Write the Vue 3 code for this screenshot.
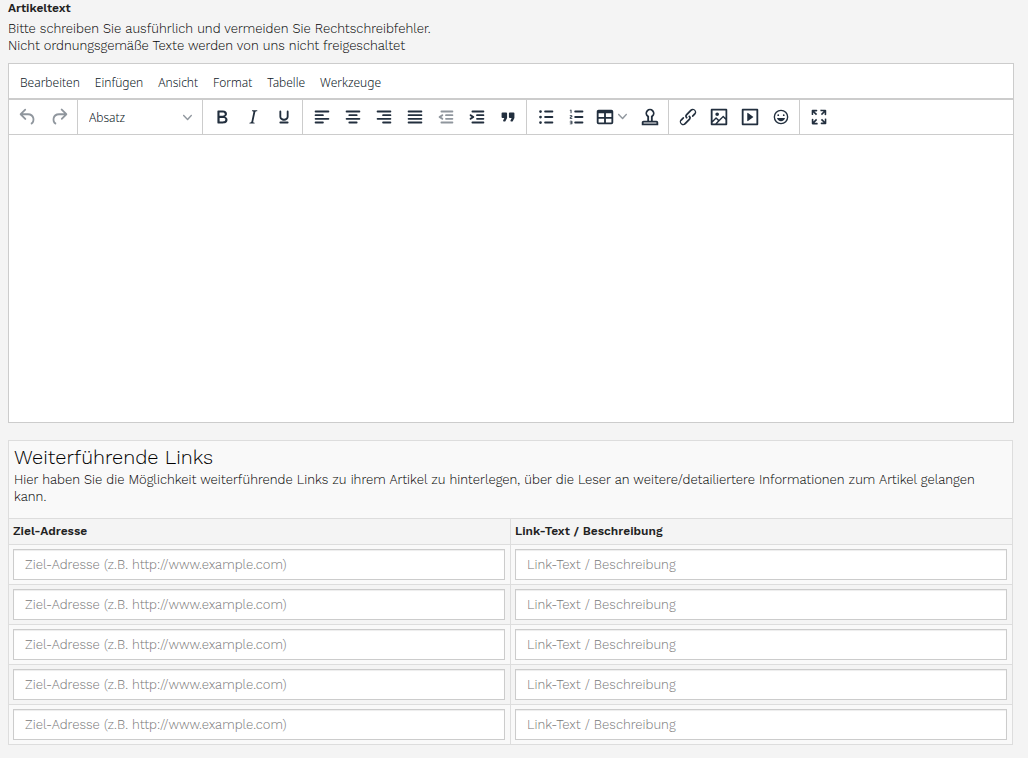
<script setup>
import { ref } from 'vue'

const menus = ['Bearbeiten', 'Einfügen', 'Ansicht', 'Format', 'Tabelle', 'Werkzeuge']

const bar = (x, y, w) => `M${x} ${y}h${w}c.6 0 1 .4 1 1s-.4 1-1 1H${x}a1 1 0 110-2z`
const dot = (y) => `M4.5 ${y}a1.5 1.5 0 103 0a1.5 1.5 0 10-3 0z`
const listBars = (x) => bar(x, 5, 8) + bar(x, 11, 8) + bar(x, 17, 8)

const history = [
  { label: 'Rückgängig', disabled: true, d: 'M6.4 8H12c3.7 0 6.2 2 6.8 5.1.6 2.7-.4 5.6-2.3 6.8a1 1 0 01-1-1.8c1.1-.6 1.8-2.7 1.4-4.6-.5-2.1-2.1-3.5-4.9-3.5H6.4l3.3 3.3a1 1 0 11-1.4 1.4l-5-5a1 1 0 010-1.4l5-5a1 1 0 011.4 1.4L6.4 8z' },
  { label: 'Wiederholen', disabled: true, d: 'M17.6 10H12c-2.8 0-4.4 1.4-4.9 3.5-.4 2 .3 4 1.4 4.6a1 1 0 11-1 1.8c-2-1.2-2.9-4.1-2.3-6.8.6-3 3-5.1 6.8-5.1h5.6l-3.3-3.3a1 1 0 111.4-1.4l5 5a1 1 0 010 1.4l-5 5a1 1 0 01-1.4-1.4l3.3-3.3z' },
]

const chevron = 'M8.7 2.2c.3-.3.8-.3 1 0 .4.4.4.9 0 1.2L5.7 7.8c-.3.3-.9.3-1.2 0L.2 3.4a.8.8 0 010-1.2c.3-.3.8-.3 1.1 0L5 6l3.7-3.8z'

const groups = [
  [
    { label: 'Fett', d: 'M7.8 19c-.3 0-.5 0-.6-.2l-.2-.5V5.7c0-.2 0-.4.2-.5l.6-.2h5c1.5 0 2.7.3 3.5 1 .7.6 1.1 1.4 1.1 2.5a3 3 0 01-.6 1.9c-.4.6-1 1-1.6 1.2.4.1.9.3 1.3.6s.8.7 1 1.2c.4.4.5 1 .5 1.6 0 1.3-.4 2.3-1.3 3-.8.7-2.1 1-3.8 1H7.8zm5-8.3c.6 0 1.2-.1 1.6-.5.4-.3.6-.7.6-1.3 0-1.1-.8-1.7-2.3-1.7H9.3v3.5h3.4zm.5 6c.7 0 1.3-.1 1.7-.4.4-.4.6-.9.6-1.5s-.2-1-.7-1.4c-.4-.3-1-.4-2-.4H9.4v3.8h4z' },
    { label: 'Kursiv', d: 'M16.7 4.7l-.1.9h-.3c-.6 0-1 0-1.4.3-.3.3-.4.6-.5 1.1l-2.1 9.8v.6c0 .5.4.8 1.4.8h.2l-.2.8H8l.2-.8h.2c1.1 0 1.8-.5 2-1.5l2-9.8.1-.5c0-.6-.4-.8-1.4-.8h-.3l.2-.9h5.8z' },
    { label: 'Unterstrichen', d: 'M16 5c.6 0 1 .4 1 1v5.5a4 4 0 01-.4 1.8l-1 1.4a5.3 5.3 0 01-5.5 1 5 5 0 01-1.6-1c-.5-.4-.8-.9-1.1-1.4a4 4 0 01-.4-1.8V6c0-.6.4-1 1-1s1 .4 1 1v5.5c0 .3 0 .6.2 1l.6.7a3.3 3.3 0 002.2.8 3.4 3.4 0 002.2-.8c.3-.2.4-.5.6-.8l.2-.9V6c0-.6.4-1 1-1zM8 17h8c.6 0 1 .4 1 1s-.4 1-1 1H8a1 1 0 010-2z' },
  ],
  [
    { label: 'Linksbündig', d: bar(5, 5, 14) + bar(5, 9, 8) + bar(5, 13, 14) + bar(5, 17, 8) },
    { label: 'Zentriert', d: bar(5, 5, 14) + bar(8, 9, 8) + bar(5, 13, 14) + bar(8, 17, 8) },
    { label: 'Rechtsbündig', d: bar(5, 5, 14) + bar(11, 9, 8) + bar(5, 13, 14) + bar(11, 17, 8) },
    { label: 'Blocksatz', d: bar(5, 5, 14) + bar(5, 9, 14) + bar(5, 13, 14) + bar(5, 17, 14) },
    { label: 'Einzug verkleinern', disabled: true, d: bar(7, 5, 12) + bar(12, 9, 7) + bar(12, 13, 7) + bar(7, 17, 12) + 'M8.6 13.2a1 1 0 01-1.2 1.6l-3-2a1 1 0 010-1.6l3-2a1 1 0 011.2 1.6L6.8 12l1.8 1.2z' },
    { label: 'Einzug vergrößern', d: bar(7, 5, 12) + bar(12, 9, 7) + bar(12, 13, 7) + bar(7, 17, 12) + 'M4.4 13.2L6.2 12l-1.8-1.2a1 1 0 011.2-1.6l3 2a1 1 0 010 1.6l-3 2a1 1 0 11-1.2-1.6z' },
    { label: 'Blockzitat', d: 'M7.5 17h.9c.4 0 .7-.2.9-.6L11 13V8c0-.6-.4-1-1-1H6a1 1 0 00-1 1v4c0 .6.4 1 1 1h2l-1.3 2.7a1 1 0 00.8 1.3zm8 0h.9c.4 0 .7-.2.9-.6L19 13V8c0-.6-.4-1-1-1h-4a1 1 0 00-1 1v4c0 .6.4 1 1 1h2l-1.3 2.7a1 1 0 00.8 1.3z' },
  ],
  [
    { label: 'Aufzählung', d: listBars(11) + dot(6) + dot(12) + dot(18) },
    { label: 'Nummerierte Liste', d: listBars(10) + 'M6 4v3.5c0 .3-.2.5-.5.5a.5.5 0 01-.5-.5V5h-.5a.5.5 0 010-1H6zm-1 8.8l.2.2h1.3c.3 0 .5.2.5.5s-.2.5-.5.5H4.9a1 1 0 01-.9-1V13c0-.4.3-.8.6-1l1.2-.4.2-.3a.2.2 0 00-.2-.2H4.5a.5.5 0 01-.5-.5c0-.3.2-.5.5-.5h1.6c.5 0 .9.4.9 1v.1c0 .4-.3.8-.6 1l-1.2.4-.2.3zM7 17v2c0 .6-.4 1-1 1H4.5a.5.5 0 010-1h1.2c.2 0 .3-.1.3-.3 0-.2-.1-.3-.3-.3H4.4a.4.4 0 110-.8h1.3c.2 0 .3-.1.3-.3 0-.2-.1-.3-.3-.3H4.5a.5.5 0 110-1H6c.6 0 1 .4 1 1z' },
    { label: 'Tabelle', menu: true, d: 'M19 4a2 2 0 012 2v12a2 2 0 01-2 2H5a2 2 0 01-2-2V6c0-1.1.9-2 2-2h14zM5 14v4h6v-4H5zm14 0h-6v4h6v-4zm0-6h-6v4h6V8zM5 12h6V8H5v4z' },
    { label: 'Vorlage einfügen', d: 'M19 19v-1H5v1h14zM9 16v-4a5 5 0 116 0v4h4a2 2 0 012 2v3H3v-3c0-1.1.9-2 2-2h4zm4 0v-5l.8-.6a3 3 0 10-3.6 0l.8.6v5h2z' },
  ],
  [
    { label: 'Link einfügen', d: 'M6.2 12.3a1 1 0 011.4 1.4l-2.1 2a2 2 0 102.7 2.8l4.8-4.8a1 1 0 000-1.4 1 1 0 111.4-1.3 2.9 2.9 0 010 4L9.6 20a3.9 3.9 0 01-5.5-5.5l2-2zm11.6-.6a1 1 0 01-1.4-1.4l2-2a2 2 0 10-2.6-2.8L11 10.3a1 1 0 000 1.4A1 1 0 119.6 13a2.9 2.9 0 010-4L14.4 4a3.9 3.9 0 015.5 5.5l-2 2z' },
    { label: 'Bild einfügen', d: 'M5 15.7l3.3-3.2c.3-.3.7-.3 1 0L12 15l4.1-4c.3-.4.8-.4 1 0l2 1.9V5H5v10.7zM5 18V19h3l2.8-2.9-2-2L5 17.9zm14-3l-2.5-2.4-6.4 6.5H19v-4zM4 3h16c.6 0 1 .4 1 1v16c0 .6-.4 1-1 1H4a1 1 0 01-1-1V4c0-.6.4-1 1-1zm6 8a2 2 0 100-4 2 2 0 000 4z' },
    { label: 'Medien einfügen', d: 'M4 3h16c.6 0 1 .4 1 1v16c0 .6-.4 1-1 1H4a1 1 0 01-1-1V4c0-.6.4-1 1-1zm1 2v14h14V5H5zm4.8 2.6l5.6 4a.5.5 0 010 .8l-5.6 4A.5.5 0 019 16V8a.5.5 0 01.8-.4z' },
    { label: 'Emoticons', d: 'M9 11c.6 0 1-.4 1-1s-.4-1-1-1a1 1 0 00-1 1c0 .6.4 1 1 1zm6 0c.6 0 1-.4 1-1s-.4-1-1-1a1 1 0 00-1 1c0 .6.4 1 1 1zm-3 5.5c2.1 0 4-1.5 4.4-3.5H7.6c.5 2 2.3 3.5 4.4 3.5zM12 4a8 8 0 100 16 8 8 0 000-16zm0 14.5a6.5 6.5 0 110-13 6.5 6.5 0 010 13z' },
  ],
  [
    { label: 'Vollbild', d: 'M15.3 10l-1.2-1.3 2.9-3h-2.3a.9.9 0 110-1.7H19c.5 0 .9.4.9.9v4.4a.9.9 0 11-1.8 0V7l-2.9 3zm0 4l3 3v-2.3a.9.9 0 111.7 0V19c0 .5-.4.9-.9.9h-4.4a.9.9 0 110-1.8H17l-3-2.9 1.3-1.2zM10 15.4l-2.9 3h2.3a.9.9 0 110 1.7H5a.9.9 0 01-.9-.9v-4.4a.9.9 0 111.8 0V17l2.9-3 1.2 1.3zM8.7 10L5.7 7v2.3a.9.9 0 01-1.7 0V5c0-.5.4-.9.9-.9h4.4a.9.9 0 010 1.8H7l3 2.9-1.3 1.2z' },
  ],
]

const text = ref('')
const links = ref(Array.from({ length: 5 }, () => ({ url: '', title: '' })))
</script>

<template>
  <main class="page">
    <label class="label" for="article">Artikeltext</label>
    <p class="hint">
      Bitte schreiben Sie ausführlich und vermeiden Sie Rechtschreibfehler.<br />
      Nicht ordnungsgemäße Texte werden von uns nicht freigeschaltet
    </p>

    <section class="editor">
      <div class="menubar">
        <button v-for="m in menus" :key="m" type="button" class="menu">{{ m }}</button>
      </div>
      <div class="toolbar">
        <div class="group">
          <button v-for="b in history" :key="b.label" type="button" class="tool" :disabled="b.disabled" :aria-label="b.label">
            <svg class="icon" viewBox="0 0 24 24"><path :d="b.d" /></svg>
          </button>
        </div>
        <div class="group format">
          <select class="format-select" aria-label="Absatzformat">
            <option>Absatz</option>
          </select>
          <svg class="chevron format-chevron" viewBox="0 0 10 10"><path :d="chevron" /></svg>
        </div>
        <div v-for="(g, i) in groups" :key="i" class="group">
          <button
            v-for="b in g"
            :key="b.label"
            type="button"
            class="tool"
            :class="{ split: b.menu }"
            :disabled="b.disabled"
            :aria-label="b.label"
          >
            <svg class="icon" viewBox="0 0 24 24"><path :d="b.d" /></svg>
            <svg v-if="b.menu" class="chevron" viewBox="0 0 10 10"><path :d="chevron" /></svg>
          </button>
        </div>
      </div>
      <textarea id="article" v-model="text" class="content"></textarea>
    </section>

    <table class="links">
      <thead>
        <tr class="intro">
          <td colspan="2">
            <h2>Weiterführende Links</h2>
            <p>Hier haben Sie die Möglichkeit weiterführende Links zu ihrem Artikel zu hinterlegen, über die Leser an weitere/detailiertere Informationen zum Artikel gelangen kann.</p>
          </td>
        </tr>
        <tr class="heads">
          <th scope="col">Ziel-Adresse</th>
          <th scope="col">Link-Text / Beschreibung</th>
        </tr>
      </thead>
      <tbody>
        <tr v-for="(l, i) in links" :key="i">
          <td><input v-model="l.url" type="text" aria-label="Ziel-Adresse" placeholder="Ziel-Adresse (z.B. http://www.example.com)" /></td>
          <td><input v-model="l.title" type="text" aria-label="Link-Text / Beschreibung" placeholder="Link-Text / Beschreibung" /></td>
        </tr>
      </tbody>
    </table>
  </main>
</template>

<style>
body {
  background: #f4f4f4;
}
</style>

<style scoped>
* {
  box-sizing: border-box;
}
.page {
  padding: 0 14px 13px 8px;
  font: 300 13px/17px "Work Sans", "Noto Sans", sans-serif;
  color: #000;
}
.label {
  display: block;
}
.label,
.links th {
  color: #222;
  font-size: 12px;
  font-weight: 600;
}
.hint {
  margin: 3px 0 9px;
}
.editor {
  border: 1px solid #ccc;
  background: #fff;
  color: #0c1826;
}
.menubar {
  display: flex;
  gap: 1px;
  height: 36px;
  padding: 0 4px;
  border-bottom: 2px solid #ccc;
}
.menu {
  padding: 2px 7px 0;
  border: 0;
  background: none;
  color: inherit;
  font: 300 12px/17px "Noto Sans", sans-serif;
}
.toolbar {
  display: flex;
  height: 35px;
  border-bottom: 1px solid #ccc;
}
.group {
  display: flex;
  align-items: flex-start;
  padding: 1px 3px 0;
  border-right: 1px solid #ccc;
}
.group:last-child {
  border-right: 0;
}
.tool {
  display: flex;
  align-items: center;
  justify-content: center;
  width: 31px;
  height: 31px;
  padding: 0;
  border: 0;
  background: none;
}
.tool:disabled {
  opacity: 0.5;
}
.split {
  justify-content: flex-start;
  width: 42px;
  padding-left: 2px;
}
.icon {
  width: 22px;
  height: 22px;
  fill: #222f3e;
  fill-rule: evenodd;
}
.chevron {
  width: 9px;
  height: 9px;
  margin-left: 2px;
  fill: #222f3e;
  opacity: 0.5;
}
.format {
  position: relative;
  align-items: center;
  width: 125px;
  padding-top: 0;
}
.format-select {
  width: 100%;
  height: 31px;
  padding: 0 8px;
  border: 0;
  appearance: none;
  background: none;
  color: inherit;
  font: 300 12px/17px "Noto Sans", sans-serif;
}
.format-chevron {
  position: absolute;
  right: 10px;
  pointer-events: none;
}
.content {
  display: block;
  width: 100%;
  height: 287px;
  padding: 12px;
  border: 0;
  outline: 0;
  resize: none;
  background: #fff;
  font: inherit;
}
.links {
  width: calc(100% - 1px);
  margin-top: 17px;
  border-collapse: collapse;
  table-layout: fixed;
}
.links td,
.links th {
  padding: 4px 5px 4px 4px;
  border: 1px solid #ddd;
  text-align: left;
}
.links tr {
  background: #f4f4f4;
}
.links .intro,
.links tbody tr:nth-child(odd) {
  background: #f9f9f9;
}
.links .intro td {
  padding: 5px 5px 13px;
}
.links h2 {
  margin: 0 0 2px;
  font-size: 20px;
  font-weight: 300;
  line-height: 23px;
}
.links p {
  margin: 0;
}
.links input {
  display: block;
  width: 100%;
  height: 31px;
  padding: 0 11px;
  border: 1px solid #ccc;
  box-shadow: inset 0 1px 1px rgba(0, 0, 0, 0.075);
  background: #fff;
  color: #000;
  font: inherit;
}
.links input::placeholder {
  color: #777;
  opacity: 1;
}
</style>
